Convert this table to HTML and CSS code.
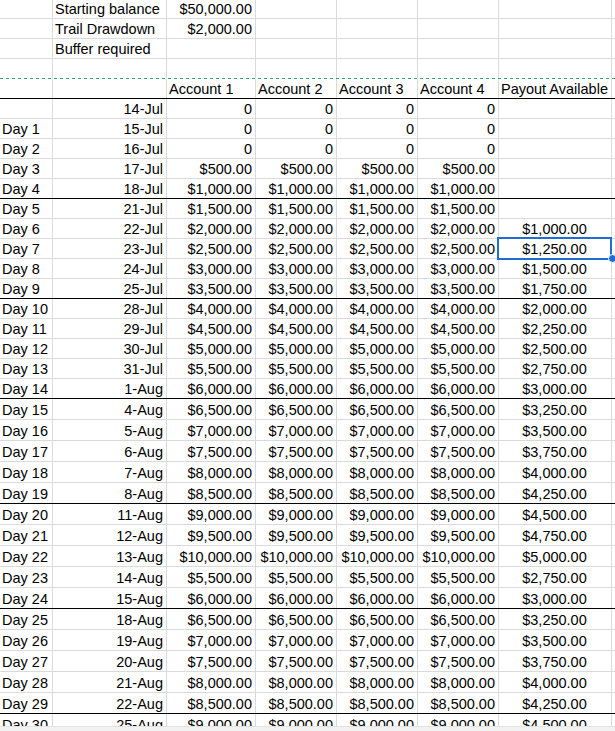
FILE: index.html
```html
<!DOCTYPE html>
<html>
<head>
<meta charset="utf-8">
<link rel="stylesheet" href="styles.css">
</head>
<body>
<div class="sheet">
  <div class="row first"><div class="c"></div><div class="c">Starting balance</div><div class="c r">$50,000.00</div><div class="c"></div><div class="c"></div><div class="c"></div><div class="c"></div><div class="c h"></div></div>
  <div class="row"><div class="c"></div><div class="c">Trail Drawdown</div><div class="c r">$2,000.00</div><div class="c"></div><div class="c"></div><div class="c"></div><div class="c"></div><div class="c h"></div></div>
  <div class="row"><div class="c"></div><div class="c">Buffer required</div><div class="c r"></div><div class="c"></div><div class="c"></div><div class="c"></div><div class="c"></div><div class="c h"></div></div>
  <div class="row pb"><div class="c"></div><div class="c"></div><div class="c"></div><div class="c"></div><div class="c"></div><div class="c"></div><div class="c"></div><div class="c h"></div></div>
  <div class="row wk"><div class="c"></div><div class="c"></div><div class="c">Account 1</div><div class="c">Account 2</div><div class="c">Account 3</div><div class="c">Account 4</div><div class="c">Payout Available</div><div class="c h"></div></div>
  <div class="row"><div class="c"></div><div class="c r">14-Jul</div><div class="c r">0</div><div class="c r">0</div><div class="c r">0</div><div class="c r">0</div><div class="c"></div><div class="c h"></div></div>
  <div class="row"><div class="c">Day 1</div><div class="c r">15-Jul</div><div class="c r">0</div><div class="c r">0</div><div class="c r">0</div><div class="c r">0</div><div class="c"></div><div class="c h"></div></div>
  <div class="row"><div class="c">Day 2</div><div class="c r">16-Jul</div><div class="c r">0</div><div class="c r">0</div><div class="c r">0</div><div class="c r">0</div><div class="c"></div><div class="c h"></div></div>
  <div class="row"><div class="c">Day 3</div><div class="c r">17-Jul</div><div class="c r">$500.00</div><div class="c r">$500.00</div><div class="c r">$500.00</div><div class="c r">$500.00</div><div class="c"></div><div class="c h"></div></div>
  <div class="row wk"><div class="c">Day 4</div><div class="c r">18-Jul</div><div class="c r">$1,000.00</div><div class="c r">$1,000.00</div><div class="c r">$1,000.00</div><div class="c r">$1,000.00</div><div class="c"></div><div class="c h"></div></div>
  <div class="row"><div class="c">Day 5</div><div class="c r">21-Jul</div><div class="c r">$1,500.00</div><div class="c r">$1,500.00</div><div class="c r">$1,500.00</div><div class="c r">$1,500.00</div><div class="c"></div><div class="c h"></div></div>
  <div class="row"><div class="c">Day 6</div><div class="c r">22-Jul</div><div class="c r">$2,000.00</div><div class="c r">$2,000.00</div><div class="c r">$2,000.00</div><div class="c r">$2,000.00</div><div class="c m">$1,000.00</div><div class="c h"></div></div>
  <div class="row"><div class="c">Day 7</div><div class="c r">23-Jul</div><div class="c r">$2,500.00</div><div class="c r">$2,500.00</div><div class="c r">$2,500.00</div><div class="c r">$2,500.00</div><div class="c m sel">$1,250.00<span class="selbox"></span><span class="handle"></span></div><div class="c h"></div></div>
  <div class="row"><div class="c">Day 8</div><div class="c r">24-Jul</div><div class="c r">$3,000.00</div><div class="c r">$3,000.00</div><div class="c r">$3,000.00</div><div class="c r">$3,000.00</div><div class="c m">$1,500.00</div><div class="c h"></div></div>
  <div class="row wk"><div class="c">Day 9</div><div class="c r">25-Jul</div><div class="c r">$3,500.00</div><div class="c r">$3,500.00</div><div class="c r">$3,500.00</div><div class="c r">$3,500.00</div><div class="c m">$1,750.00</div><div class="c h"></div></div>
  <div class="row"><div class="c">Day 10</div><div class="c r">28-Jul</div><div class="c r">$4,000.00</div><div class="c r">$4,000.00</div><div class="c r">$4,000.00</div><div class="c r">$4,000.00</div><div class="c m">$2,000.00</div><div class="c h"></div></div>
  <div class="row"><div class="c">Day 11</div><div class="c r">29-Jul</div><div class="c r">$4,500.00</div><div class="c r">$4,500.00</div><div class="c r">$4,500.00</div><div class="c r">$4,500.00</div><div class="c m">$2,250.00</div><div class="c h"></div></div>
  <div class="row"><div class="c">Day 12</div><div class="c r">30-Jul</div><div class="c r">$5,000.00</div><div class="c r">$5,000.00</div><div class="c r">$5,000.00</div><div class="c r">$5,000.00</div><div class="c m">$2,500.00</div><div class="c h"></div></div>
  <div class="row"><div class="c">Day 13</div><div class="c r">31-Jul</div><div class="c r">$5,500.00</div><div class="c r">$5,500.00</div><div class="c r">$5,500.00</div><div class="c r">$5,500.00</div><div class="c m">$2,750.00</div><div class="c h"></div></div>
  <div class="row wk"><div class="c">Day 14</div><div class="c r">1-Aug</div><div class="c r">$6,000.00</div><div class="c r">$6,000.00</div><div class="c r">$6,000.00</div><div class="c r">$6,000.00</div><div class="c m">$3,000.00</div><div class="c h"></div></div>
  <div class="row tall"><div class="c">Day 15</div><div class="c r">4-Aug</div><div class="c r">$6,500.00</div><div class="c r">$6,500.00</div><div class="c r">$6,500.00</div><div class="c r">$6,500.00</div><div class="c m">$3,250.00</div><div class="c h"></div></div>
  <div class="row tall"><div class="c">Day 16</div><div class="c r">5-Aug</div><div class="c r">$7,000.00</div><div class="c r">$7,000.00</div><div class="c r">$7,000.00</div><div class="c r">$7,000.00</div><div class="c m">$3,500.00</div><div class="c h"></div></div>
  <div class="row tall"><div class="c">Day 17</div><div class="c r">6-Aug</div><div class="c r">$7,500.00</div><div class="c r">$7,500.00</div><div class="c r">$7,500.00</div><div class="c r">$7,500.00</div><div class="c m">$3,750.00</div><div class="c h"></div></div>
  <div class="row tall"><div class="c">Day 18</div><div class="c r">7-Aug</div><div class="c r">$8,000.00</div><div class="c r">$8,000.00</div><div class="c r">$8,000.00</div><div class="c r">$8,000.00</div><div class="c m">$4,000.00</div><div class="c h"></div></div>
  <div class="row tall wk"><div class="c">Day 19</div><div class="c r">8-Aug</div><div class="c r">$8,500.00</div><div class="c r">$8,500.00</div><div class="c r">$8,500.00</div><div class="c r">$8,500.00</div><div class="c m">$4,250.00</div><div class="c h"></div></div>
  <div class="row tall"><div class="c">Day 20</div><div class="c r">11-Aug</div><div class="c r">$9,000.00</div><div class="c r">$9,000.00</div><div class="c r">$9,000.00</div><div class="c r">$9,000.00</div><div class="c m">$4,500.00</div><div class="c h"></div></div>
  <div class="row tall"><div class="c">Day 21</div><div class="c r">12-Aug</div><div class="c r">$9,500.00</div><div class="c r">$9,500.00</div><div class="c r">$9,500.00</div><div class="c r">$9,500.00</div><div class="c m">$4,750.00</div><div class="c h"></div></div>
  <div class="row tall"><div class="c">Day 22</div><div class="c r">13-Aug</div><div class="c r">$10,000.00</div><div class="c r">$10,000.00</div><div class="c r">$10,000.00</div><div class="c r">$10,000.00</div><div class="c m">$5,000.00</div><div class="c h"></div></div>
  <div class="row tall"><div class="c">Day 23</div><div class="c r">14-Aug</div><div class="c r">$5,500.00</div><div class="c r">$5,500.00</div><div class="c r">$5,500.00</div><div class="c r">$5,500.00</div><div class="c m">$2,750.00</div><div class="c h"></div></div>
  <div class="row tall wk"><div class="c">Day 24</div><div class="c r">15-Aug</div><div class="c r">$6,000.00</div><div class="c r">$6,000.00</div><div class="c r">$6,000.00</div><div class="c r">$6,000.00</div><div class="c m">$3,000.00</div><div class="c h"></div></div>
  <div class="row tall"><div class="c">Day 25</div><div class="c r">18-Aug</div><div class="c r">$6,500.00</div><div class="c r">$6,500.00</div><div class="c r">$6,500.00</div><div class="c r">$6,500.00</div><div class="c m">$3,250.00</div><div class="c h"></div></div>
  <div class="row tall"><div class="c">Day 26</div><div class="c r">19-Aug</div><div class="c r">$7,000.00</div><div class="c r">$7,000.00</div><div class="c r">$7,000.00</div><div class="c r">$7,000.00</div><div class="c m">$3,500.00</div><div class="c h"></div></div>
  <div class="row tall"><div class="c">Day 27</div><div class="c r">20-Aug</div><div class="c r">$7,500.00</div><div class="c r">$7,500.00</div><div class="c r">$7,500.00</div><div class="c r">$7,500.00</div><div class="c m">$3,750.00</div><div class="c h"></div></div>
  <div class="row tall"><div class="c">Day 28</div><div class="c r">21-Aug</div><div class="c r">$8,000.00</div><div class="c r">$8,000.00</div><div class="c r">$8,000.00</div><div class="c r">$8,000.00</div><div class="c m">$4,000.00</div><div class="c h"></div></div>
  <div class="row tall wk"><div class="c">Day 29</div><div class="c r">22-Aug</div><div class="c r">$8,500.00</div><div class="c r">$8,500.00</div><div class="c r">$8,500.00</div><div class="c r">$8,500.00</div><div class="c m">$4,250.00</div><div class="c h"></div></div>
  <div class="row tall"><div class="c">Day 30</div><div class="c r">25-Aug</div><div class="c r">$9,000.00</div><div class="c r">$9,000.00</div><div class="c r">$9,000.00</div><div class="c r">$9,000.00</div><div class="c m">$4,500.00</div><div class="c h"></div></div>
</div>
<div class="strip"></div>
</body>
</html>
```
FILE: styles.css
```css
html, body {
  margin: 0;
  padding: 0;
  background: #ffffff;
  overflow: hidden;
}
body {
  width: 615px;
  height: 731px;
  font-family: "Liberation Sans", Arial, sans-serif;
  font-size: 14.5px;
  color: #000000;
}
.sheet {
  height: 726px;
  overflow: hidden;
}
.row {
  display: grid;
  grid-template-columns: 53px 114px 89px 81px 81px 81px 113px 1fr;
  height: 20px;
  box-sizing: border-box;
  border-bottom: 1px solid #dadada;
}
.row.first { height: 19px; }
.row.tall { height: 21px; }
.row.wk { border-bottom-color: #000000; }
.row.pb {
  border-bottom: 0;
  padding-bottom: 1px;
  background: repeating-linear-gradient(90deg, #3aa862 0 3px, transparent 3px 6px) left bottom / 100% 1px no-repeat;
}
.c {
  display: flex;
  align-items: flex-end;
  justify-content: flex-start;
  padding: 0 3px 0 2px;
  border-right: 1px solid #dadada;
  line-height: 17px;
  white-space: nowrap;
  min-width: 0;
}
.c.r { justify-content: flex-end; }
.c.m { justify-content: center; }
.c.h { border-right: 0; }
.sel { position: relative; }
.selbox {
  position: absolute;
  left: -2px;
  top: -2px;
  right: -1px;
  bottom: -2px;
  border: 2px solid #1f6ed4;
  pointer-events: none;
}
.handle {
  position: absolute;
  right: -6px;
  bottom: -5px;
  width: 7px;
  height: 7px;
  border-radius: 50%;
  background: #1f6ed4;
  border: 1px solid #ffffff;
}
.strip {
  height: 5px;
  background: #f2f2f2;
  border-top: 1px solid #e3e3e3;
  box-sizing: border-box;
}
```
